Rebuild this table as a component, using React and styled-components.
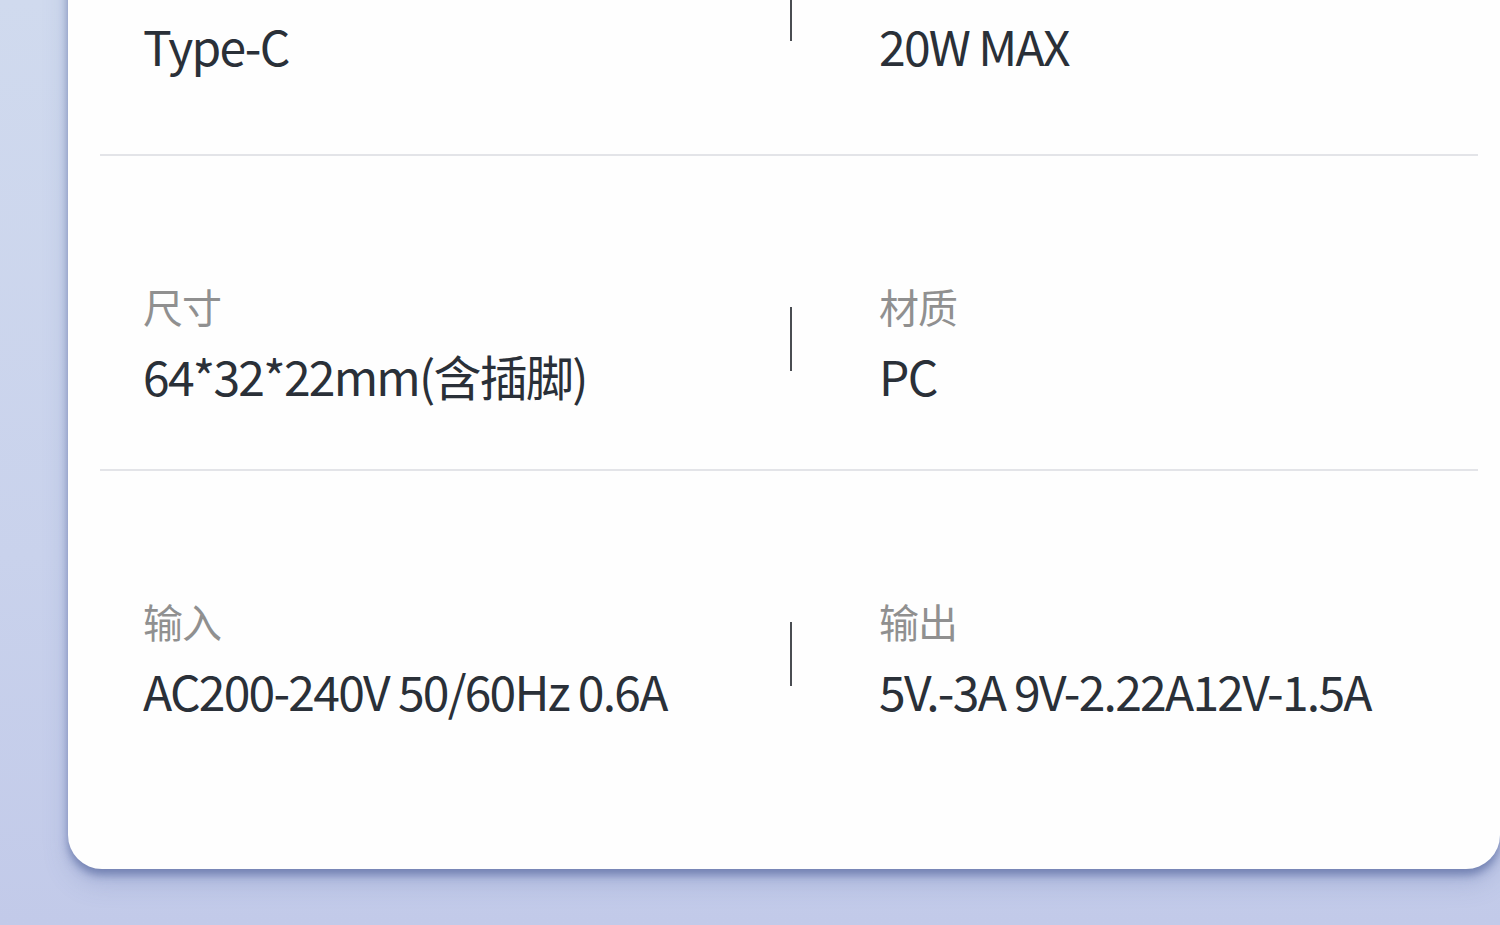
import styled, { createGlobalStyle } from "styled-components";

const Global = createGlobalStyle`
  html, body {
    margin: 0;
    padding: 0;
    height: 100%;
    overflow: hidden;
  }
  body {
    background: #c6cfea;
    font-family: "Noto Sans CJK SC", "Noto Sans", sans-serif;
  }
`;

const Page = styled.div`
  width: 1500px;
  height: 925px;
  overflow: hidden;
  background: linear-gradient(180deg, #d0daee 0%, #c9d2ec 60%, #c2cae9 100%);
`;

const Card = styled.div`
  margin: -174px 0 0 68px;
  width: 1432px;
  background: #fefefe;
  border-radius: 34px;
  box-shadow: 0 6px 8px rgba(70, 88, 145, 0.55), 0 14px 24px rgba(90, 110, 170, 0.25);
  padding: 0 22px 151px 32px;
  box-sizing: border-box;
`;

const Row = styled.div`
  display: grid;
  grid-template-columns: 690px 2px 1fr;
  align-items: center;
  padding: 127px 0 ${(p) => p.$bottom}px;
  border-bottom: ${(p) => (p.$last ? "none" : "2px solid #e3e4e8")};
`;

const Cell = styled.div`
  padding-left: ${(p) => p.$indent}px;
  display: flex;
  flex-direction: column;
  gap: 18px;
`;

const Label = styled.div`
  font-size: 40px;
  line-height: 46px;
  color: #909090;
  letter-spacing: -1px;
`;

const Value = styled.div`
  font-size: 48px;
  line-height: 56px;
  color: #2a3038;
  letter-spacing: -1.75px;
  white-space: nowrap;
`;

const Sep = styled.div`
  width: 2px;
  height: 64px;
  margin-top: -8px;
  background: #4a4d52;
`;

const specs = [
  [["接口", "Type-C"], ["功率", "20W MAX"]],
  [["尺寸", "64*32*22mm(含插脚)"], ["材质", "PC"]],
  [["输入", "AC200-240V 50/60Hz 0.6A"], ["输出", "5V.-3A 9V-2.22A12V-1.5A"]],
];

const bottoms = [81, 66, 0];

export default function App() {
  return (
    <Page>
      <Global />
      <Card>
        {specs.map(([a, b], i) => (
          <Row key={i} $last={i === specs.length - 1} $bottom={bottoms[i]}>
            <Cell $indent={43}>
              <Label>{a[0]}</Label>
              <Value>{a[1]}</Value>
            </Cell>
            <Sep />
            <Cell $indent={87}>
              <Label>{b[0]}</Label>
              <Value>{b[1]}</Value>
            </Cell>
          </Row>
        ))}
      </Card>
    </Page>
  );
}
